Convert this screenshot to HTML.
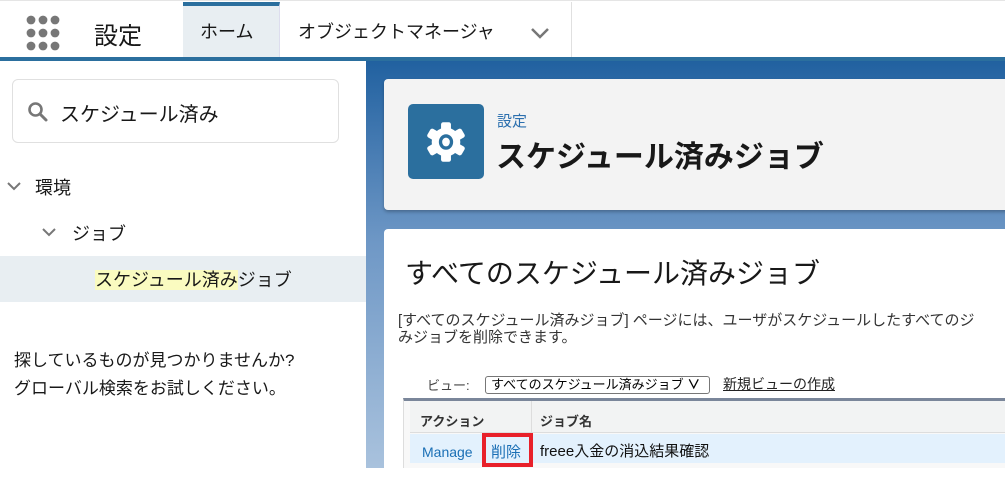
<!DOCTYPE html>
<html><head><meta charset="utf-8"><style>
*{margin:0;padding:0;box-sizing:border-box}
body{width:1005px;height:468px;overflow:hidden;font-family:"Liberation Sans","Noto Sans CJK JP",sans-serif;background:#fff;position:relative;color:#181818}
.a{position:absolute}
</style></head><body>
<div class="a" style="left:0;top:0;width:1005px;height:57px;background:#fff;border-top:1px solid #e5e5e5"></div>
<svg class="a" style="left:26px;top:15px" width="34" height="38" viewBox="0 0 34 38" fill="#777">
<circle cx="5" cy="5" r="4.4"/><circle cx="17" cy="5" r="4.4"/><circle cx="29" cy="5" r="4.4"/>
<circle cx="5" cy="18" r="4.4"/><circle cx="17" cy="18" r="4.4"/><circle cx="29" cy="18" r="4.4"/>
<circle cx="5" cy="31" r="4.4"/><circle cx="17" cy="31" r="4.4"/><circle cx="29" cy="31" r="4.4"/></svg>
<div class="a" style="left:94px;top:16px;font-size:24px">設定</div>
<div class="a" style="left:183px;top:2px;width:97px;height:55px;background:#e8eef2;border-top:4px solid #2b6f9e;border-right:1px solid #dde"></div>
<div class="a" style="left:200px;top:18px;font-size:18px">ホーム</div>
<div class="a" style="left:298px;top:18px;font-size:18px">オブジェクトマネージャ</div>
<svg class="a" style="left:530px;top:27px" width="20" height="12"><path d="M2 2 L10 10 L18 2" stroke="#777" stroke-width="2.5" fill="none"/></svg>
<div class="a" style="left:571px;top:2px;width:1px;height:55px;background:#e0e0e0"></div>
<div class="a" style="left:0;top:57px;width:1005px;height:4px;background:#2b6f9e"></div>
<div class="a" style="left:366px;top:61px;width:639px;height:407px;background:linear-gradient(180deg,#2161a0 0%,#6f98c6 45%,#a9c2dd 100%)"></div>
<div class="a" style="left:384px;top:79px;width:640px;height:131px;background:#f3f3f3;border-radius:4px;box-shadow:0 2px 3px rgba(0,0,0,.25)"></div>
<div class="a" style="left:408px;top:104px;width:76px;height:75px;background:#2b6f9e;border-radius:5px"></div>
<svg class="a" style="left:424px;top:120px" width="44" height="44" viewBox="0 0 36 40"><g fill="#fff"><circle cx="18" cy="20" r="13"/>
<rect x="13.5" y="2" width="9" height="9" rx="2"/><rect x="13.5" y="29" width="9" height="9" rx="2"/>
<rect x="13.5" y="2" width="9" height="9" rx="2" transform="rotate(60 18 20)"/><rect x="13.5" y="2" width="9" height="9" rx="2" transform="rotate(120 18 20)"/>
<rect x="13.5" y="2" width="9" height="9" rx="2" transform="rotate(240 18 20)"/><rect x="13.5" y="2" width="9" height="9" rx="2" transform="rotate(300 18 20)"/></g>
<ellipse cx="18" cy="20" rx="6.5" ry="7" fill="#2b6f9e"/><ellipse cx="18" cy="20" rx="3.5" ry="4" fill="#fff"/></svg>
<div class="a" style="left:497px;top:110px;font-size:15px;color:#2b6fae">設定</div>
<div class="a" style="left:496px;top:132px;font-size:30px;font-weight:bold;color:#181818">スケジュール済みジョブ</div>
<div class="a" style="left:384px;top:229px;width:640px;height:260px;background:#fff;border-radius:4px"></div>
<div class="a" style="left:405px;top:252px;font-size:28px">すべてのスケジュール済みジョブ</div>
<div class="a" style="left:398px;top:312px;font-size:15px;line-height:17px;color:#333;white-space:nowrap">[すべてのスケジュール済みジョブ] ページには、ユーザがスケジュールしたすべてのジ<br>みジョブを削除できます。</div>
<div class="a" style="left:427px;top:375px;font-size:13px;color:#444">ビュー:</div>
<div class="a" style="left:485px;top:376px;width:225px;height:18px;border:1px solid #777;border-radius:3px;font-size:13px;padding-left:5px;line-height:16px;color:#000">すべてのスケジュール済みジョブ <span style="font-weight:bold">∨</span></div>
<div class="a" style="left:723px;top:374px;font-size:14px;text-decoration:underline;color:#222">新規ビューの作成</div>
<div class="a" style="left:403px;top:398px;width:602px;height:70px;background:#f8f8f8;border-top:3px solid #7a869a;border-left:1px solid #ddd"></div>
<div class="a" style="left:410px;top:401px;width:595px;height:32px;background:#f2f3f3;border-bottom:1px solid #ddd"></div>
<div class="a" style="left:531px;top:401px;width:1px;height:32px;background:#ddd"></div>
<div class="a" style="left:420px;top:411px;font-size:13px;font-weight:bold;color:#333">アクション</div>
<div class="a" style="left:540px;top:411px;font-size:13px;font-weight:bold;color:#333">ジョブ名</div>
<div class="a" style="left:410px;top:434px;width:595px;height:29px;background:#e3f1fd"></div>
<div class="a" style="left:422px;top:444px;font-size:14px;color:#1a6fb5">Manage</div>
<div class="a" style="left:482px;top:433px;width:51px;height:34px;border:4px solid #e8202a"></div>
<div class="a" style="left:491px;top:441px;font-size:15px;color:#1a6fb5">削除</div>
<div class="a" style="left:540px;top:440px;font-size:15px;color:#111">freee入金の消込結果確認</div>
<div class="a" style="left:12px;top:79px;width:327px;height:64px;border:1px solid #e0e0e0;border-radius:6px"></div>
<svg class="a" style="left:27px;top:101px" width="22" height="22"><circle cx="8.5" cy="8.5" r="6" stroke="#777" stroke-width="2.6" fill="none"/><path d="M13 13 L19 19" stroke="#777" stroke-width="3" stroke-linecap="round"/></svg>
<div class="a" style="left:60px;top:98px;font-size:20px">スケジュール済み</div>
<svg class="a" style="left:6px;top:180px" width="16" height="12"><path d="M2 3 L8 9 L14 3" stroke="#777" stroke-width="2" fill="none"/></svg>
<div class="a" style="left:35px;top:174px;font-size:18px">環境</div>
<svg class="a" style="left:41px;top:226px" width="16" height="12"><path d="M2 3 L8 9 L14 3" stroke="#777" stroke-width="2" fill="none"/></svg>
<div class="a" style="left:72px;top:220px;font-size:18px">ジョブ</div>
<div class="a" style="left:0;top:256px;width:366px;height:46px;background:#e8eef2"></div>
<div class="a" style="left:95px;top:266px;font-size:18px;white-space:nowrap"><span style="background:#fafbc0">スケジュール済み</span>ジョブ</div>
<div class="a" style="left:14px;top:347px;font-size:17px;line-height:28px;color:#181818">探しているものが見つかりませんか?<br>グローバル検索をお試しください。</div>
</body></html>
